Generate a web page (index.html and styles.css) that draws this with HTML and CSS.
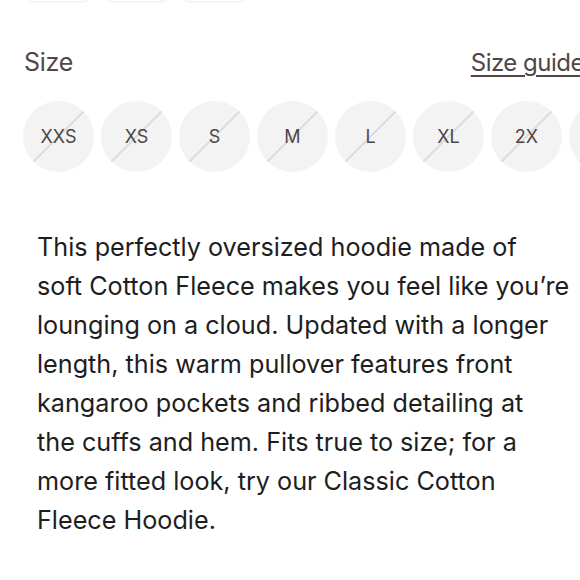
FILE: index.html
```html
<!DOCTYPE html>
<html>
<head>
<meta charset="utf-8">
<link rel="stylesheet" href="styles.css">
</head>
<body>
<div class="page">
  <div class="swatches">
    <div class="swatch"></div>
    <div class="swatch"></div>
    <div class="swatch"></div>
  </div>
  <div class="size-head">
    <span class="size-label">Size</span>
    <a class="size-guide">Size guide</a>
  </div>
  <div class="sizes">
    <div class="size">XXS</div>
    <div class="size">XS</div>
    <div class="size">S</div>
    <div class="size">M</div>
    <div class="size">L</div>
    <div class="size">XL</div>
    <div class="size">2X</div>
    <div class="size">3X</div>
  </div>
  <p class="desc">This perfectly oversized hoodie made of<br>soft Cotton Fleece makes you feel like you’re<br>lounging on a cloud. Updated with a longer<br>length, this warm pullover features front<br>kangaroo pockets and ribbed detailing at<br>the cuffs and hem. Fits true to size; for a<br>more fitted look, try our Classic Cotton<br>Fleece Hoodie.</p>
</div>
</body>
</html>
```
FILE: styles.css
```css
html, body {
  margin: 0;
  padding: 0;
  background: #fff;
}
body {
  width: 580px;
  height: 580px;
  overflow: hidden;
  font-family: Inter, "Noto Sans", sans-serif;
}
.page {
  width: 580px;
}
.swatches {
  display: flex;
  gap: 15px;
  padding-left: 27px;
  margin-top: -38px;
}
.swatch {
  width: 63px;
  height: 40px;
  box-sizing: border-box;
  border: 1px solid #efefef;
  border-radius: 7px;
  box-shadow: 0 1px 2px rgba(0,0,0,0.04);
}
.size-head {
  display: flex;
  justify-content: flex-start;
  align-items: baseline;
  padding-left: 24px;
  margin-top: 44px;
  white-space: nowrap;
}
.size-label {
  font-size: 25px;
  line-height: 32px;
  letter-spacing: -0.3px;
  color: #4f4645;
}
.size-guide {
  font-size: 24px;
  line-height: 32px;
  letter-spacing: -0.5px;
  color: #4f4645;
  text-decoration: underline;
  text-underline-offset: 4px;
  text-decoration-thickness: 2px;
  margin-left: auto;
  margin-right: -4px;
}
.sizes {
  display: flex;
  gap: 7px;
  padding-left: 23px;
  margin-top: 22px;
  width: 700px;
}
.size {
  flex: none;
  width: 71px;
  height: 71px;
  border-radius: 50%;
  background-color: #f3f3f3;
  background-image: linear-gradient(135deg, transparent calc(50% - 1.3px), #dddddd calc(50% - 1.3px), #dddddd calc(50% + 1.3px), transparent calc(50% + 1.3px));
  display: flex;
  align-items: center;
  justify-content: center;
  font-size: 18px;
  color: #4f4645;
}
.desc {
  margin: 56px 0 0 0;
  padding-left: 37px;
  padding-right: 0;
  font-size: 25.2px;
  line-height: 39px;
  color: #1e1e1e;
}
```
